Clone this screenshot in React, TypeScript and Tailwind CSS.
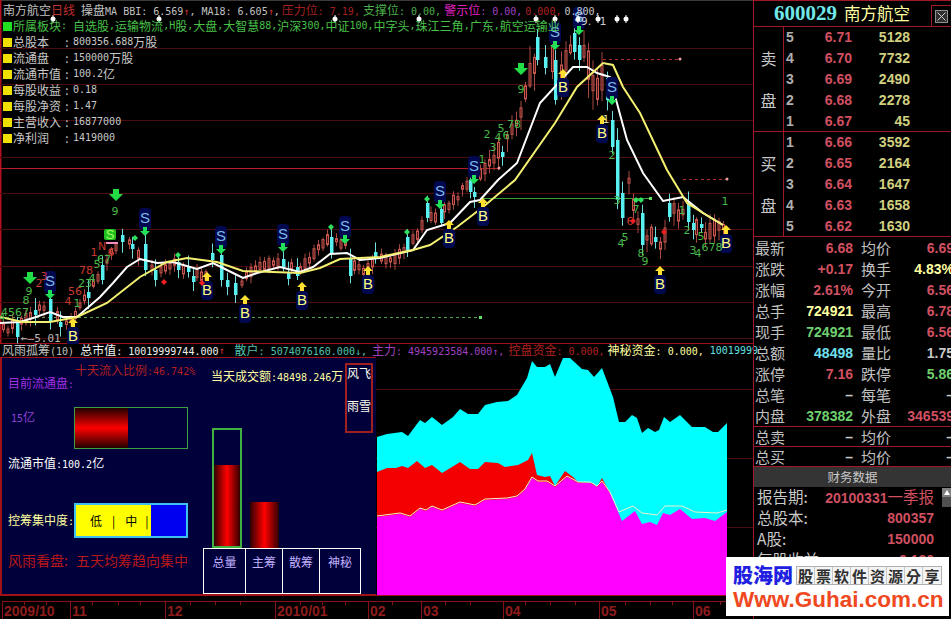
import React from "react";

const mono = "[font-family:'DejaVu_Sans_Mono',monospace] text-[10px]";
const arrow = "[font-family:'DejaVu_Sans_Mono',monospace] text-[10px] text-[#d03030]";

function Mix({ t }: { t: string }) {
  const parts = t.split(/([\x20-\x7e↑↓]+)/).filter(Boolean);
  return (
    <>
      {parts.map((p, i) =>
        /^[\x20-\x7e↑↓]+$/.test(p) ? (
          <span key={i} className="[font-family:'DejaVu_Sans_Mono',monospace] text-[10px] whitespace-pre">
            {p}
          </span>
        ) : (
          <span key={i}>{p}</span>
        )
      )}
    </>
  );
}

const pricePath: number[][] = [[3,330],[17,325],[30,315],[40,308],[50,308],[60,322],[70,320],[80,305],[90,285],[100,275],[110,255],[118,245],[125,240],[135,250],[145,255],[155,275],[165,265],[175,262],[190,275],[205,275],[215,255],[225,278],[240,285],[250,270],[270,265],[285,265],[297,272],[310,260],[320,245],[330,240],[345,245],[355,270],[365,270],[380,260],[395,260],[405,245],[415,240],[425,215],[440,215],[450,205],[462,190],[470,185],[480,175],[490,160],[500,150],[510,135],[520,115],[530,70],[540,60],[550,50],[560,80],[565,60],[575,40],[585,55],[595,90],[602,80],[608,100],[625,165],[635,215],[645,235],[655,240],[662,245],[670,205],[680,215],[690,215],[700,235],[712,230],[722,225],[728,222]];

const cyan: number[][] = [[50,299,322],[145,244,270],[221,255,280],[235,283,295],[283,259,267],[331,237,253],[350,258,276],[122,235,242],[132,244,249],[102,265,280],[88,292,298],[60,322,327],[17,323,337],[35,310,315],[155,270,280],[178,262,270],[188,267,272],[193,276,282],[212,253,260],[227,280,287],[288,272,279],[297,267,276],[375,252,258],[407,237,250],[441,209,223],[427,203,218],[470,180,192],[474,192,197],[502,152,157],[537,37,60],[545,57,68],[555,60,100],[574,33,52],[579,45,60],[607,78,100],[612,120,147],[617,140,200],[622,193,218],[642,213,245],[655,237,242],[669,203,217],[688,203,222],[693,223,230],[701,224,228]];

function interp(x: number) {
  for (let i = 0; i < pricePath.length - 1; i++) {
    const [a, b] = pricePath[i];
    const [c, d] = pricePath[i + 1];
    if (x >= a && x <= c) return b + ((d - b) * (x - a)) / (c - a);
  }
  return 222;
}
const hash = (n: number) => {
  const s = Math.sin(n * 12.9898) * 43758.5453;
  return s - Math.floor(s);
};

const reds: { x: number; t: number; b: number; h: number; l: number }[] = [];
for (let i = 0; i < 161; i++) {
  const x = 3 + i * 4.5;
  if (cyan.some((c) => Math.abs(c[0] - x) < 2.6)) continue;
  const vol = x > 525 && x < 615 ? 26 : x > 480 && x < 720 ? 14 : 7;
  const m = interp(x) + (hash(i) - 0.5) * 6;
  const hh = 3 + hash(i + 50) * vol;
  const t = m - hh / 2;
  const b = m + hh / 2;
  reds.push({ x, t, b, h: t - 2 - hash(i + 99) * vol * 0.6, l: b + 2 + hash(i + 7) * vol * 0.8 });
}

const whiteLine = "0,323 20,322 33,318 50,312 63,317 77,317 100,297 113,283 127,267 140,259 157,263 173,262 197,269 213,263 233,273 243,278 257,273 280,267 300,272 313,267 330,254 347,253 360,260 380,258 413,250 427,230 450,223 470,202 480,200 498,180 517,163 540,103 552,90 573,67 587,67 597,73 610,77 618,107 627,140 643,173 663,201 683,197 703,213 723,225";
const yellowLine = "0,317 23,322 50,322 77,317 107,303 140,277 167,262 187,258 217,262 243,271 273,272 300,273 320,268 340,259 380,257 413,250 430,245 457,227 483,207 515,180 555,123 577,87 603,63 613,65 623,87 640,113 667,170 687,203 703,213 723,225";

const sMarks = [[50,281],[145,218],[221,236],[283,234],[345,226],[440,191],[474,166],[555,32],[579,17],[612,87]];
const bMarks = [[73,336],[207,290],[245,313],[302,300],[368,284],[449,238],[483,216],[563,87],[602,133],[660,284],[726,243]];
const nums: [number, number, string, string][] = [
  [2,317,"4","g"],[15,312,"4567","g"],[26,300,"8","g"],[29,291,"9","g"],[39,283,"2","r"],[44,276,"3","r"],[68,301,"4","r"],[75,291,"56","r"],[77,303,"1","g"],[86,270,"78","r"],[85,283,"23","g"],[92,278,"4","g"],[97,264,"5","g"],[104,259,"67","g"],[94,252,"1","r"],[102,246,"N","r"],[111,252,"6","r"],[115,211,"9","g"],
  [482,159,"1","g"],[487,134,"2","g"],[493,147,"3","g"],[498,137,"4","g"],[501,128,"5","g"],[506,135,"6","g"],[514,124,"78","g"],[521,89,"9","g"],[612,155,"2","g"],[606,119,"1","y"],[586,21,"9.","w"],[603,21,"1","w"],
  [617,200,"3","g"],[636,209,"7","g"],[630,221,"6","r"],[625,237,"5","g"],[621,243,"4","g"],[641,253,"8","g"],[645,261,"9","g"],[725,201,"1","g"],[682,210,"1","g"],[687,230,"2","g"],[693,250,"3","g"],[698,253,"4","g"],[701,236,"5","g"],[712,247,"678","g"],
];
const numColor: Record<string, string> = { g: "#49b849", r: "#c83a30", w: "#c8c8c8", y: "#d8d890" };
const stars = [[53,19],[159,19],[335,19],[419,19],[536,19],[555,19],[578,19],[598,19],[617,19],[626,19]];
const diamonds: [number, number, string][] = [[407,232,"#30e060"],[427,199,"#30e060"],[135,238,"#30e060"],[178,255,"#30e060"],[331,227,"#30e060"],[636,200,"#30e060"],[641,200,"#30e060"],[164,282,"#f02020"],[202,283,"#f02020"],[664,232,"#f02020"],[633,221,"#f02020"]];

function PriceChart() {
  const gridY = [48, 84, 120, 157, 193, 229, 266, 302, 338];
  return (
    <svg className="absolute inset-0" width={753} height={344} viewBox="0 0 753 344">
      <rect x="0" y="0" width="753" height="1" fill="#3a3a3a" />
      <rect x="0" y="0" width="1.5" height="344" fill="#b01020" />
      {gridY.map((y) => (
        <line key={y} x1="0" x2="753" y1={y + 0.5} y2={y + 0.5} stroke="#4a0c0c" />
      ))}
      <line x1="0" x2="499" y1="168.5" y2="168.5" stroke="#b81c24" />
      <line x1="482" x2="650" y1="198.5" y2="198.5" stroke="#39a039" />
      <line x1="0" x2="480" y1="317.5" y2="317.5" stroke="#4fa64f" strokeDasharray="3 3" />
      <line x1="603" x2="680" y1="59.5" y2="59.5" stroke="#b03030" strokeDasharray="3 3" />
      <line x1="683" x2="727" y1="179.5" y2="179.5" stroke="#b03030" strokeDasharray="3 3" />
      {reds.map((c, i) => (
        <g key={i}>
          <line x1={c.x + 0.5} x2={c.x + 0.5} y1={c.h} y2={c.l} stroke="#a84840" />
          <rect x={c.x - 0.5} y={c.t} width={2} height={c.b - c.t} fill="#4a1414" stroke="#c85850" strokeWidth="1" />
        </g>
      ))}
      {cyan.map(([x, t, b], i) => (
        <g key={i}>
          <line x1={x + 0.5} x2={x + 0.5} y1={t - 5 - hash(i) * 7} y2={b + 3 + hash(i + 3) * 8} stroke="#70dcdc" />
          <rect x={x - 1} y={t} width={3.5} height={b - t} fill="#58f0f0" />
        </g>
      ))}
      <polyline points={whiteLine} fill="none" stroke="#ffffff" strokeWidth="2" />
      <polyline points={yellowLine} fill="none" stroke="#f4f070" strokeWidth="2" />
      {sMarks.map(([x, y], i) => (
        <g key={i}>
          <rect x={x - 6} y={y - 10} width={12} height={22} rx={4} fill="#000850" />
          <text x={x} y={y + 5} textAnchor="middle" fontSize="15" fontFamily="Liberation Sans, sans-serif" fill="#7cb8e8">S</text>
          <polygon transform={`translate(${x},${y + 13})`} points="-2,-4 2,-4 2,0 5,0 0,5 -5,0 -2,0" fill="#22e05a" />
        </g>
      ))}
      {bMarks.map(([x, y], i) => (
        <g key={i}>
          <rect x={x - 6} y={y - 9} width={12} height={19} rx={4} fill="#000850" />
          <text x={x} y={y + 5} textAnchor="middle" fontSize="15" fontFamily="Liberation Sans, sans-serif" fill="#ffff80">B</text>
          <polygon transform={`translate(${x},${y - 13})`} points="0,-5 5,0 2,0 2,4 -2,4 -2,0 -5,0" fill="#ffe030" />
        </g>
      ))}
      {[[30,277],[116,194],[521,68]].map(([x, y], i) => (
        <polygon key={i} transform={`translate(${x},${y})`} points="-3,-5 3,-5 3,0 7,0 0,7 -7,0 -3,0" fill="#22dd44" />
      ))}
      <rect x="104" y="229" width="12" height="11" rx="2" fill="#20c020" />
      <text x="110" y="239" textAnchor="middle" fontSize="13" fontFamily="Liberation Sans, sans-serif" fill="#a0ff60">S</text>
      <rect x="106" y="242" width="12" height="2" fill="#f090c0" />
      {nums.map(([x, y, s, c], i) => (
        <text key={i} x={x} y={y + 4} textAnchor="middle" fontSize="11" fontFamily="DejaVu Sans, sans-serif" fill={numColor[c]}>{s}</text>
      ))}
      {diamonds.map(([x, y, c], i) => (
        <polygon key={i} points={`${x},${y - 3} ${x + 3},${y} ${x},${y + 3} ${x - 3},${y}`} fill={c} />
      ))}
      {stars.map(([x, y], i) => (
        <g key={i}>
          <circle cx={x} cy={y} r={2.5} fill="#fff" />
          <rect x={x - 0.5} y={y - 4} width={1} height={8} fill="#fff" />
        </g>
      ))}
      <text x="21" y="342" fontSize="11" fontFamily="DejaVu Sans Mono, monospace" fill="#b8b8b8">←—5.01</text>
      <circle cx="499" cy="168" r="1.5" fill="#f0a0a0" />
      <circle cx="680" cy="59" r="1.5" fill="#f0a0a0" />
      <circle cx="727" cy="179" r="1.5" fill="#f0a0a0" />
      <rect x="649" y="197" width="3" height="3" fill="#60e060" />
      <rect x="479" y="316" width="3" height="3" fill="#60e060" />
    </svg>
  );
}

const cyanTop = "377,437 387,434 402,432 408,436 420,420 425,423 432,417 442,425 453,417 460,409 468,414 478,414 485,405 497,402 508,401 517,395 527,378 532,361 537,367 545,367 550,364 555,377 563,358 570,358 582,369 588,370 594,377 602,368 613,397 619,422 625,422 632,415 637,418 642,433 648,428 655,432 659,430 664,417 670,422 680,415 692,427 705,427 713,432 718,432 727,423";
const redTop = "377,472 387,468 396,468 402,466 408,468 417,461 425,468 432,465 442,473 452,467 460,462 470,469 478,469 485,462 498,463 505,467 518,465 528,460 532,453 537,475 545,477 550,476 555,486 565,471 573,477 578,482 592,483 597,487 602,478 610,493";
const magTop = "377,517 400,514 410,517 420,509 426,511 432,507 442,511 460,503 475,506 485,500 507,499 517,497 525,490 532,478 538,482 547,482 555,487 567,477 578,483 590,483 597,487 602,482 610,493 622,521 635,511 642,524 650,522 657,525 663,513 670,515 680,509 692,519 705,518 715,521 727,512";
const paleLine = "377,516 400,513 410,516 420,508 426,510 432,506 442,510 460,502 475,505 485,499 507,498 517,496 525,489 532,477 538,481 547,481 555,486 567,476 578,482 590,482 597,486 602,481 610,492 619,512 633,506 642,513 657,515 665,506 682,506 695,512 717,513 727,510";

function AreaChart() {
  return (
    <svg className="block flex-1" width={377} height={238} viewBox="376 357 377 238">
      {[389, 458, 527].map((y) => (
        <line key={y} x1="376" x2="753" y1={y + 0.5} y2={y + 0.5} stroke="#4a0c0c" />
      ))}
      <polygon points={`${cyanTop} 727,595 377,595`} fill="#00ffff" />
      <polygon points={`${redTop} 610,595 377,595`} fill="#f40000" />
      <polygon points={`${magTop} 727,595 377,595`} fill="#ff00ff" />
      <polyline points={paleLine} fill="none" stroke="#f0f0d0" strokeWidth="1" />
    </svg>
  );
}

function Grad({ dir, className }: { dir: "v" | "h"; className: string }) {
  return (
    <div className={`${className} ${dir === "v" ? "bg-[linear-gradient(to_bottom,#200000,#ff0000,#200000)]" : "bg-[linear-gradient(to_right,#300000,#ff0000,#300000)]"}`} />
  );
}

function IndicatorPanel() {
  return (
    <div className="relative flex w-[376px] h-full shrink-0 bg-[#00003a] border-y border-l-2 border-[#a01018] text-[12px] leading-[14px]">
      <div className="w-[201px] shrink-0 flex flex-col pl-[6px]">
        <div className="pl-[67px] pt-[5px] text-[#b02020]"><Mix t="十天流入比例:46.742%" /></div>
        <div className="-mt-[3px] text-[#a030e0]"><Mix t="目前流通盘:" /></div>
        <div className="flex items-center pt-[15px]">
          <div className="w-[66px] pl-[3px] pb-[20px] text-[#9040d0]"><Mix t="15亿" /></div>
          <div className="w-[114px] h-[42px] border border-[#40a040]">
            <Grad dir="v" className="w-[53px] h-full" />
          </div>
        </div>
        <div className="pt-[7px] text-white"><Mix t="流通市值:100.2亿" /></div>
        <div className="flex items-center pt-[31px]">
          <div className="w-[66px] text-[#ffffa0] whitespace-nowrap"><Mix t="控筹集中度:" /></div>
          <div className="flex w-[114px] h-[35px] border-2 border-[#40c0f0]">
            <div className="w-[75px] bg-[#ffff00] text-black flex items-center pl-[14px] whitespace-pre">
              <span>低</span>
              <span className="ml-[10px]">|</span>
              <span className="ml-[10px]">中</span>
              <span className="ml-[8px]">|</span>
            </div>
            <div className="flex-1 bg-[#0000f0]" />
          </div>
        </div>
        <div className="pt-[14px] text-[14px] leading-[16px] text-[#b81818] whitespace-pre">风雨看盘:<span className="ml-[8px]">五天均筹趋向集中</span></div>
      </div>
      <div className="flex-1 flex flex-col">
        <div className="pl-[8px] pt-[11px] text-[#ffffa0] h-[71px] whitespace-nowrap"><Mix t="当天成交额:48498.246万" /></div>
        <div className="flex items-end gap-[8px] pl-[9px] flex-1">
          <div className="w-[30px] h-[120px] border-2 border-[#40b040] flex flex-col justify-end">
            <Grad dir="h" className="w-full h-[81px]" />
          </div>
          <Grad dir="h" className="w-[29px] h-[46px]" />
        </div>
        <div className="flex w-[158px] h-[46px] border border-white text-[#c0b0ff]">
          <div className="w-[42px] border-r border-white text-center pt-[6px]">总量</div>
          <div className="w-[37px] border-r border-white text-center pt-[6px]">主筹</div>
          <div className="w-[37px] border-r border-white text-center pt-[6px]">散筹</div>
          <div className="flex-1 text-center pt-[6px]">神秘</div>
        </div>
      </div>
      <div className="absolute left-[343px] top-[5px] w-[28px] h-[70px] border-2 border-[#a02020] text-[#fffff0] flex flex-col items-center pt-[1px] gap-[19px]">
        <span>风飞</span>
        <span>雨雪</span>
      </div>
    </div>
  );
}

function TimeAxis() {
  const labels: [string, number][] = [["2009/10", 68], ["11", 95], ["12", 110], ["2010/01", 93], ["02", 53], ["03", 82], ["04", 96], ["05", 94], ["06", 60]];
  const ticks = [24, 46, 92, 118, 140, 190, 215, 240, 300, 322, 345, 392, 445, 470, 525, 550, 575, 625, 650, 672, 720, 742];
  return (
    <div className="relative h-[24px] border-t border-[#a01018] pt-[5px] pl-[2px]">
      <div className="flex h-[18px] border-t border-[#8a1018]">
        {labels.map(([s, w]) => (
          <div key={s} style={{ width: w }} className="border-l border-[#8a1018] pl-[1px] text-[14px] leading-[18px] font-bold text-[#8e1c1c] [font-family:'Liberation_Sans',sans-serif]">
            {s}
          </div>
        ))}
      </div>
      <svg className="absolute left-0 top-[6px]" width={753} height={3}>
        {ticks.map((x) => (
          <line key={x} x1={x + 0.5} x2={x + 0.5} y1="0" y2="3" stroke="#8a1018" />
        ))}
      </svg>
    </div>
  );
}

const num = "[font-family:'Liberation_Sans',sans-serif] font-bold text-[14px]";

function Book({ side, levels }: { side: string[]; levels: [string, string, string][] }) {
  return (
    <div className="flex h-[105px] border-b border-[#a01828]">
      <div className="w-[30px] flex flex-col items-center justify-center gap-[26px] text-[16px] leading-[16px] text-[#c8c8c8] border-r border-[#a01828]">
        <span>{side[0]}</span>
        <span>{side[1]}</span>
      </div>
      <div className="flex-1 flex flex-col">
        {levels.map(([l, p, v]) => (
          <div key={l} className={`flex h-[21px] items-center ${num}`}>
            <span className="w-[14px] pl-[2px] text-[#b0b0b0]">{l}</span>
            <span className="w-[54px] text-right text-[#d05060]">{p}</span>
            <span className="w-[58px] text-right text-[#d0d080]">{v}</span>
          </div>
        ))}
      </div>
    </div>
  );
}

const C = { r: "text-[#d05060]", y: "text-[#ffffa0]", g: "text-[#70d070]", c: "text-[#70e0f0]", w: "text-[#c8c8c8]" };

function Stat({ a, av, ac, b, bv, bc }: { a: string; av: string; ac: string; b: string; bv: string; bc: string }) {
  return (
    <div className="flex h-[21px] items-center">
      <span className="w-[32px] shrink-0 text-[15px] text-[#c0c0c0] whitespace-nowrap">{a}</span>
      <span className={`w-[66px] shrink-0 text-right ${num} ${ac}`}>{av}</span>
      <span className="ml-[8px] w-[32px] shrink-0 text-[15px] text-[#c0c0c0] whitespace-nowrap">{b}</span>
      <span className={`flex-1 text-right whitespace-nowrap -mr-[3px] ${num} ${bc}`}>{bv}</span>
    </div>
  );
}

function RightPanel() {
  return (
    <div className="w-[198px] shrink-0 h-full overflow-hidden border-l border-[#a01828] flex flex-col leading-none">
      <div className="relative flex items-center h-[27px] border-y border-[#a01828] pl-[20px]">
        <span className="w-[70px] [font-family:'Liberation_Serif',serif] font-bold text-[21px] text-[#70e8e8]">600029</span>
        <span className="text-[16.5px] text-[#ffffa0]">南方航空</span>
        <div className="absolute right-0 top-[4px] bottom-0 w-[20px] border-l border-t border-[#a01828] flex items-center justify-center">
          <svg width="13" height="13" viewBox="0 0 13 13">
            <rect x="0.5" y="0.5" width="12" height="12" fill="#303030" stroke="#909090" />
            <path d="M2.5 2.5 L10.5 10.5 M10.5 2.5 L2.5 10.5" stroke="#d0d0d0" />
          </svg>
        </div>
      </div>
      <Book side={["卖", "盘"]} levels={[["5","6.71","5128"],["4","6.70","7732"],["3","6.69","2490"],["2","6.68","2278"],["1","6.67","45"]]} />
      <Book side={["买", "盘"]} levels={[["1","6.66","3592"],["2","6.65","2164"],["3","6.64","1647"],["4","6.63","1658"],["5","6.62","1630"]]} />
      <div className="pl-[1px]">
        <Stat a="最新" av="6.68" ac={C.r} b="均价" bv="6.69" bc={C.r} />
        <Stat a="涨跌" av="+0.17" ac={C.r} b="换手" bv="4.83%" bc={C.y} />
        <Stat a="涨幅" av="2.61%" ac={C.r} b="今开" bv="6.56" bc={C.r} />
        <Stat a="总手" av="724921" ac={C.y} b="最高" bv="6.78" bc={C.r} />
        <Stat a="现手" av="724921" ac={C.g} b="最低" bv="6.56" bc={C.r} />
        <Stat a="总额" av="48498" ac={C.c} b="量比" bv="1.75" bc={C.w} />
        <Stat a="涨停" av="7.16" ac={C.r} b="跌停" bv="5.86" bc={C.g} />
        <Stat a="总笔" av="–" ac={C.w} b="每笔" bv="–" bc={C.w} />
        <Stat a="内盘" av="378382" ac={C.g} b="外盘" bv="346539" bc={C.r} />
      </div>
      <div className="pl-[1px] border-y border-[#a01828] h-[21px] flex items-center">
        <div className="w-full"><Stat a="总卖" av="–" ac={C.w} b="均价" bv="–" bc={C.w} /></div>
      </div>
      <div className="pl-[1px] h-[20px] flex items-center border-b border-[#a01828]">
        <div className="w-full"><Stat a="总买" av="–" ac={C.w} b="均价" bv="–" bc={C.w} /></div>
      </div>
      <div className="h-[20px] bg-[#343434] text-[#c8c8c8] text-[12.5px] flex items-center justify-center">财务数据</div>
      <div className="flex flex-1">
        <div className="w-[180px] pl-[3px] -mt-[1px]">
          <div className="flex h-[21px] items-center justify-between text-[15.5px] text-[#c8c8c8] whitespace-nowrap">
            <span>报告期:</span>
            <span className="text-[#d05060]"><span className={num}>20100331</span>一季报</span>
          </div>
          {[["总股本:", "800357"], ["A股:", "150000"], ["每股收益", "0.180"]].map(([a, b]) => (
            <div key={a} className="flex h-[21px] items-center justify-between text-[15.5px] text-[#c8c8c8] whitespace-nowrap">
              <span>{a}</span>
              <span className={`${num} text-[#d05060]`}>{b}</span>
            </div>
          ))}
        </div>
        <div className="ml-[8px] w-[9px] flex flex-col">
          <div className="h-[9px] mt-[1px] flex items-center justify-center bg-[#808080]">
            <div className="w-0 h-0 border-x-[3px] border-x-transparent border-b-[5px] border-b-white" />
          </div>
          <div className="h-[10px] bg-[#505050]" />
        </div>
      </div>
    </div>
  );
}

export default function App() {
  return (
    <div className="relative flex w-[951px] h-[619px] overflow-hidden bg-black [font-family:'Noto_Sans_CJK_SC',sans-serif] text-[12px]">
      <div className="w-[753px] shrink-0 flex flex-col">
        <div className="relative h-[344px]">
          <PriceChart />
          <div className="relative pl-[3px] pt-[2px] leading-[16px]">
            <div className="h-[16px] whitespace-pre text-[#c0c0c0]">
              <Mix t="南方航空" /><span className="text-[#c03030]">日线</span><Mix t=" 操盘MA " />
              <span className={mono}>BBI: 6.569</span><span className={arrow}>↑</span><span className={mono}>, MA18: 6.605</span><span className={arrow}>↑</span><span className={mono}>, </span>
              <span className="text-[#a02020] -ml-[4px]"><Mix t="压力位: 7.19, " /></span>
              <span className="text-[#4cb04c] -ml-[3px]"><Mix t="支撑位: 0.00, " /></span>
              <span className="text-[#e020c0] -ml-[3px]">警示位</span><span className="text-[#a040c0]"><Mix t=": 0.00, " /></span>
              <span className={`${mono} text-[#b02020] -ml-[3px]`}>0.000, </span>
              <span className={`${mono} text-[#c8c8c8] -ml-[3px]`}>0.800,</span>
            </div>
            <div className="flex items-center h-[16px] text-[#48c048] whitespace-pre">
              <span className="w-[9px] h-[9px] bg-[#20e020] mr-[1px]" />
              <Mix t="所属板块: 自选股,运输物流,H股,大盘,大智慧88,沪深300,中证100,中字头,珠江三角,广东,航空运输业" />
            </div>
            {[["总股本", "800356.688万股"], ["流通盘", "150000万股"], ["流通市值", "100.2亿"], ["每股收益", "0.18"], ["每股净资", "1.47"], ["主营收入", "16877000"], ["净利润", "1419000"]].map(([a, b]) => (
              <div key={a} className="flex items-center h-[16px] text-[#c8c8c8] whitespace-pre">
                <span className="w-[9px] h-[9px] bg-[#f0e000] mr-[1px]" />
                <span className="w-[48px]">{a}</span>
                <span className="w-[12px] text-center">:</span>
                <Mix t={b} />
              </div>
            ))}
          </div>
        </div>
        <div className="h-[14px] border-t border-[#a01018] whitespace-nowrap flex items-center pl-[2px] leading-[13px] w-[753px]">
          <span className="whitespace-pre text-[#c0c0c0]"><Mix t="风雨孤筹(10) " /></span>
          <span className="whitespace-pre text-[#f0f0f0]"><Mix t="总市值: 10019999744.000" /></span><span className={arrow}>↑</span><span className={`${mono} whitespace-pre`}>, </span>
          <span className="whitespace-pre text-[#50c0b0] -ml-[2px]"><Mix t="散户: 5074076160.000↓, " /></span>
          <span className="whitespace-pre text-[#a040c0] -ml-[1px]"><Mix t="主力: 4945923584.000↑, " /></span>
          <span className="whitespace-pre text-[#b02020] -ml-[2px]"><Mix t="控盘资金: 0.000, " /></span>
          <span className="whitespace-pre text-[#ffffa0] -ml-[3px]"><Mix t="神秘资金: 0.000, " /></span>
          <span className={`${mono} text-[#60e0e0]`}>10019999</span>
        </div>
        <div className="flex h-[238px]">
          <IndicatorPanel />
          <AreaChart />
        </div>
        <TimeAxis />
      </div>
      <RightPanel />
      <div className="absolute left-[726px] top-[557px] w-[223px] h-[59px] bg-white px-[7px] pt-[5px]">
        <div className="flex items-center h-[26px]">
          <span className="text-[20px] leading-[24px] font-black text-[#2020e0] w-[68px]">股海网</span>
          <div className="flex border border-[#b0b0b0] bg-[#f4f4f4]">
            {"股票软件资源分享".split("").map((c, i) => (
              <span key={i} className="w-[18px] h-[17px] text-center text-[15px] leading-[17px] text-[#303030] border-r last:border-r-0 border-[#c8c8c8] [font-family:'Noto_Sans_CJK_KR',sans-serif] font-bold">{c}</span>
            ))}
          </div>
        </div>
        <div className="[font-family:'Liberation_Sans',sans-serif] font-bold text-[22.5px] leading-[24px] text-[#f04820] whitespace-nowrap">Www.Guhai.com.cn</div>
      </div>
    </div>
  );
}
